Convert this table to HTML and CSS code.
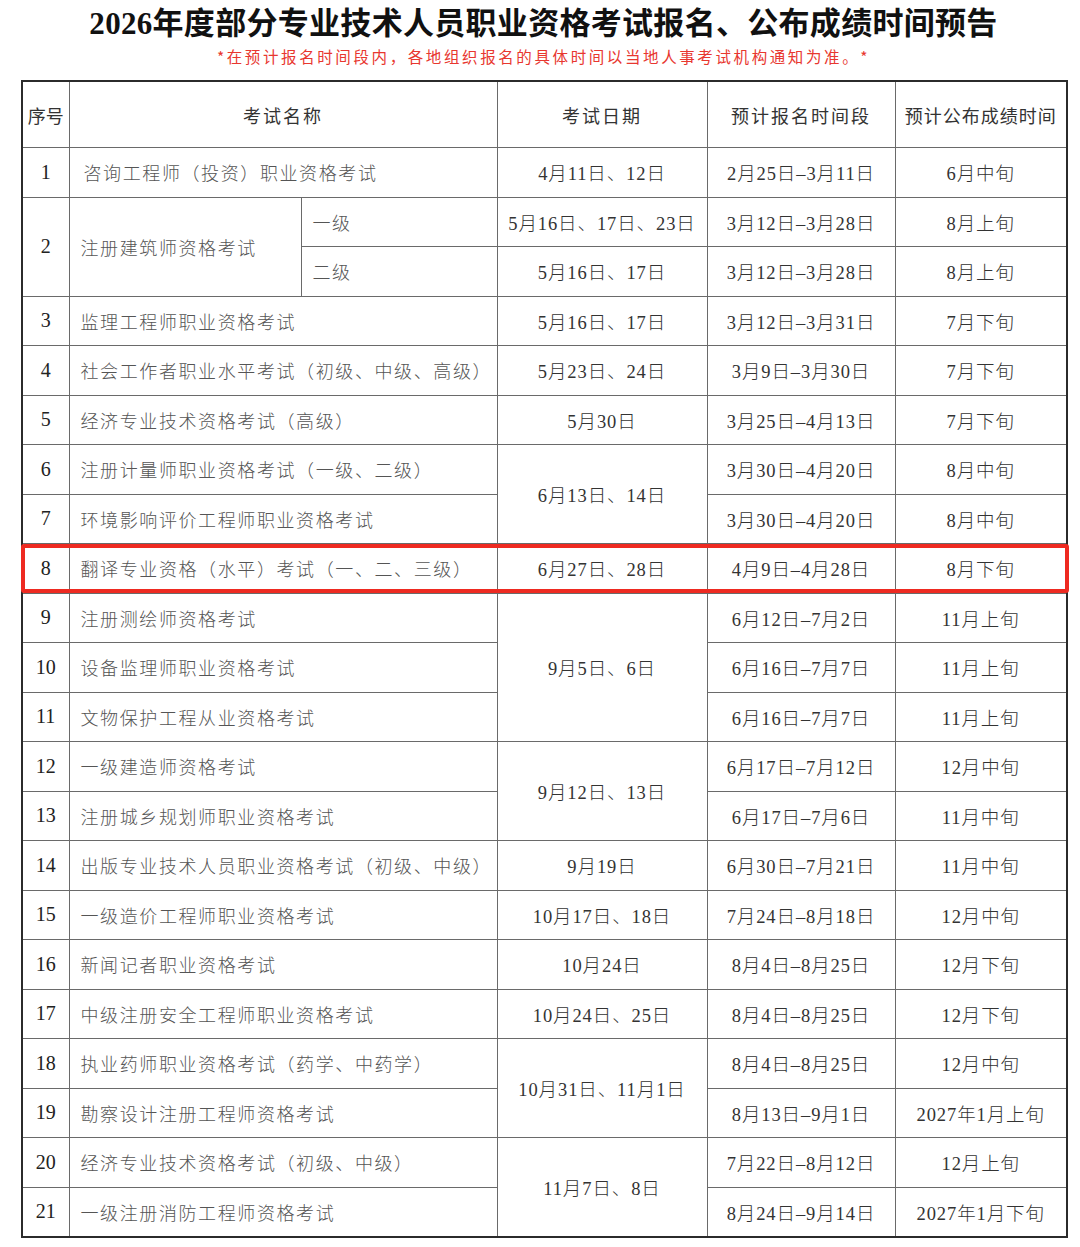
FILE: index.html
```html
<!DOCTYPE html>
<html lang="zh-CN">
<head>
<meta charset="utf-8">
<title>2026年度部分专业技术人员职业资格考试报名、公布成绩时间预告</title>
<link rel="stylesheet" href="styles.css">
</head>
<body>
<div class="page">
  <h1 class="title">2026年度部分专业技术人员职业资格考试报名、公布成绩时间预告</h1>
  <p class="note">*在预计报名时间段内，各地组织报名的具体时间以当地人事考试机构通知为准。*</p>
  <table class="sched">
    <colgroup>
      <col class="c-no"><col class="c-name"><col class="c-sub"><col class="c-date"><col class="c-reg"><col class="c-res">
    </colgroup>
    <thead>
      <tr class="head">
        <th class="no">序号</th>
        <th colspan="2">考试名称</th>
        <th>考试日期</th>
        <th>预计报名时间段</th>
        <th class="tight">预计公布成绩时间</th>
      </tr>
    </thead>
    <tbody>
      <tr><td class="no">1</td><td class="name first" colspan="2">咨询工程师（投资）职业资格考试</td><td class="d">4月11日、12日</td><td class="d">2月25日–3月11日</td><td class="d">6月中旬</td></tr>
      <tr><td class="no" rowspan="2">2</td><td class="name" rowspan="2">注册建筑师资格考试</td><td class="name">一级</td><td class="d">5月16日、17日、23日</td><td class="d">3月12日–3月28日</td><td class="d">8月上旬</td></tr>
      <tr><td class="name">二级</td><td class="d">5月16日、17日</td><td class="d">3月12日–3月28日</td><td class="d">8月上旬</td></tr>
      <tr><td class="no">3</td><td class="name" colspan="2">监理工程师职业资格考试</td><td class="d">5月16日、17日</td><td class="d">3月12日–3月31日</td><td class="d">7月下旬</td></tr>
      <tr><td class="no">4</td><td class="name" colspan="2">社会工作者职业水平考试（初级、中级、高级）</td><td class="d">5月23日、24日</td><td class="d">3月9日–3月30日</td><td class="d">7月下旬</td></tr>
      <tr><td class="no">5</td><td class="name" colspan="2">经济专业技术资格考试（高级）</td><td class="d">5月30日</td><td class="d">3月25日–4月13日</td><td class="d">7月下旬</td></tr>
      <tr><td class="no">6</td><td class="name" colspan="2">注册计量师职业资格考试（一级、二级）</td><td class="d" rowspan="2">6月13日、14日</td><td class="d">3月30日–4月20日</td><td class="d">8月中旬</td></tr>
      <tr><td class="no">7</td><td class="name" colspan="2">环境影响评价工程师职业资格考试</td><td class="d">3月30日–4月20日</td><td class="d">8月中旬</td></tr>
      <tr class="hl-row"><td class="no hl-cell"><span class="hl" aria-hidden="true"></span>8</td><td class="name" colspan="2">翻译专业资格（水平）考试（一、二、三级）</td><td class="d">6月27日、28日</td><td class="d">4月9日–4月28日</td><td class="d">8月下旬</td></tr>
      <tr><td class="no">9</td><td class="name" colspan="2">注册测绘师资格考试</td><td class="d" rowspan="3">9月5日、6日</td><td class="d">6月12日–7月2日</td><td class="d">11月上旬</td></tr>
      <tr><td class="no">10</td><td class="name" colspan="2">设备监理师职业资格考试</td><td class="d">6月16日–7月7日</td><td class="d">11月上旬</td></tr>
      <tr><td class="no">11</td><td class="name" colspan="2">文物保护工程从业资格考试</td><td class="d">6月16日–7月7日</td><td class="d">11月上旬</td></tr>
      <tr><td class="no">12</td><td class="name" colspan="2">一级建造师资格考试</td><td class="d" rowspan="2">9月12日、13日</td><td class="d">6月17日–7月12日</td><td class="d">12月中旬</td></tr>
      <tr><td class="no">13</td><td class="name" colspan="2">注册城乡规划师职业资格考试</td><td class="d">6月17日–7月6日</td><td class="d">11月中旬</td></tr>
      <tr><td class="no">14</td><td class="name" colspan="2">出版专业技术人员职业资格考试（初级、中级）</td><td class="d">9月19日</td><td class="d">6月30日–7月21日</td><td class="d">11月中旬</td></tr>
      <tr><td class="no">15</td><td class="name" colspan="2">一级造价工程师职业资格考试</td><td class="d">10月17日、18日</td><td class="d">7月24日–8月18日</td><td class="d">12月中旬</td></tr>
      <tr><td class="no">16</td><td class="name" colspan="2">新闻记者职业资格考试</td><td class="d">10月24日</td><td class="d">8月4日–8月25日</td><td class="d">12月下旬</td></tr>
      <tr><td class="no">17</td><td class="name" colspan="2">中级注册安全工程师职业资格考试</td><td class="d">10月24日、25日</td><td class="d">8月4日–8月25日</td><td class="d">12月下旬</td></tr>
      <tr><td class="no">18</td><td class="name" colspan="2">执业药师职业资格考试（药学、中药学）</td><td class="d" rowspan="2">10月31日、11月1日</td><td class="d">8月4日–8月25日</td><td class="d">12月中旬</td></tr>
      <tr><td class="no">19</td><td class="name" colspan="2">勘察设计注册工程师资格考试</td><td class="d">8月13日–9月1日</td><td class="d">2027年1月上旬</td></tr>
      <tr><td class="no">20</td><td class="name" colspan="2">经济专业技术资格考试（初级、中级）</td><td class="d" rowspan="2">11月7日、8日</td><td class="d">7月22日–8月12日</td><td class="d">12月上旬</td></tr>
      <tr><td class="no">21</td><td class="name" colspan="2">一级注册消防工程师资格考试</td><td class="d">8月24日–9月14日</td><td class="d">2027年1月下旬</td></tr>
    </tbody>
  </table>
</div>
</body>
</html>
```
FILE: styles.css
```css
html, body {
  margin: 0;
  padding: 0;
  background: #ffffff;
}

.page {
  width: 1045px;
  margin-left: 21px;
  padding-top: 7px;
  font-family: "Liberation Serif", "Noto Sans CJK SC", serif;
}

.title {
  margin: 0;
  text-align: center;
  font-family: "Liberation Serif", "Noto Sans CJK SC", serif;
  font-size: 31px;
  line-height: 33px;
  font-weight: 700;
  color: #111;
  letter-spacing: 0.3px;
}

.note {
  margin: 5px 0 0;
  text-align: center;
  font-family: "Noto Sans CJK SC", sans-serif;
  font-size: 15.5px;
  line-height: 22px;
  font-weight: 400;
  color: #e8372f;
  letter-spacing: 2.6px;
}

.sched {
  margin-top: 13px;
  width: 1045px;
  table-layout: fixed;
  border-collapse: collapse;
  border: 2px solid #2b2b2b;
  color: #444;
}

.c-no { width: 47px; }
.c-name { width: 232px; }
.c-sub { width: 196px; }
.c-date { width: 210px; }
.c-reg { width: 188px; }
.c-res { width: 172px; }

.sched th,
.sched td {
  border: 1px solid #6a6a6a;
  padding: 0;
  vertical-align: middle;
  text-align: center;
  white-space: nowrap;
}

.head th {
  height: 65px;
  font-family: "Noto Sans CJK SC", sans-serif;
  font-weight: 400;
  font-size: 18px;
  letter-spacing: 2px;
  color: #333;
}

.head th.no {
  letter-spacing: 0;
}

.head th.tight {
  letter-spacing: 1px;
}

.sched tbody td {
  height: 48.5px;
}

.sched td.no {
  font-family: "Liberation Serif", serif;
  font-size: 20px;
  color: #222;
}

.sched td.name {
  text-align: left;
  padding-left: 11px;
  font-family: "Noto Sans CJK SC", sans-serif;
  font-weight: 300;
  font-size: 18px;
  letter-spacing: 1.6px;
  color: #555;
}

.sched td.name.first {
  padding-left: 14px;
}

.sched td.d {
  font-family: "Liberation Serif", "Noto Sans CJK SC", serif;
  font-weight: 300;
  font-size: 18.5px;
  letter-spacing: 0.9px;
  color: #333;
}

.hl-cell {
  position: relative;
}

.hl {
  position: absolute;
  left: -2px;
  top: 0;
  width: 1048px;
  height: 49px;
  box-sizing: border-box;
  border: 4px solid #ee2a21;
  border-radius: 3px;
  pointer-events: none;
}
```
